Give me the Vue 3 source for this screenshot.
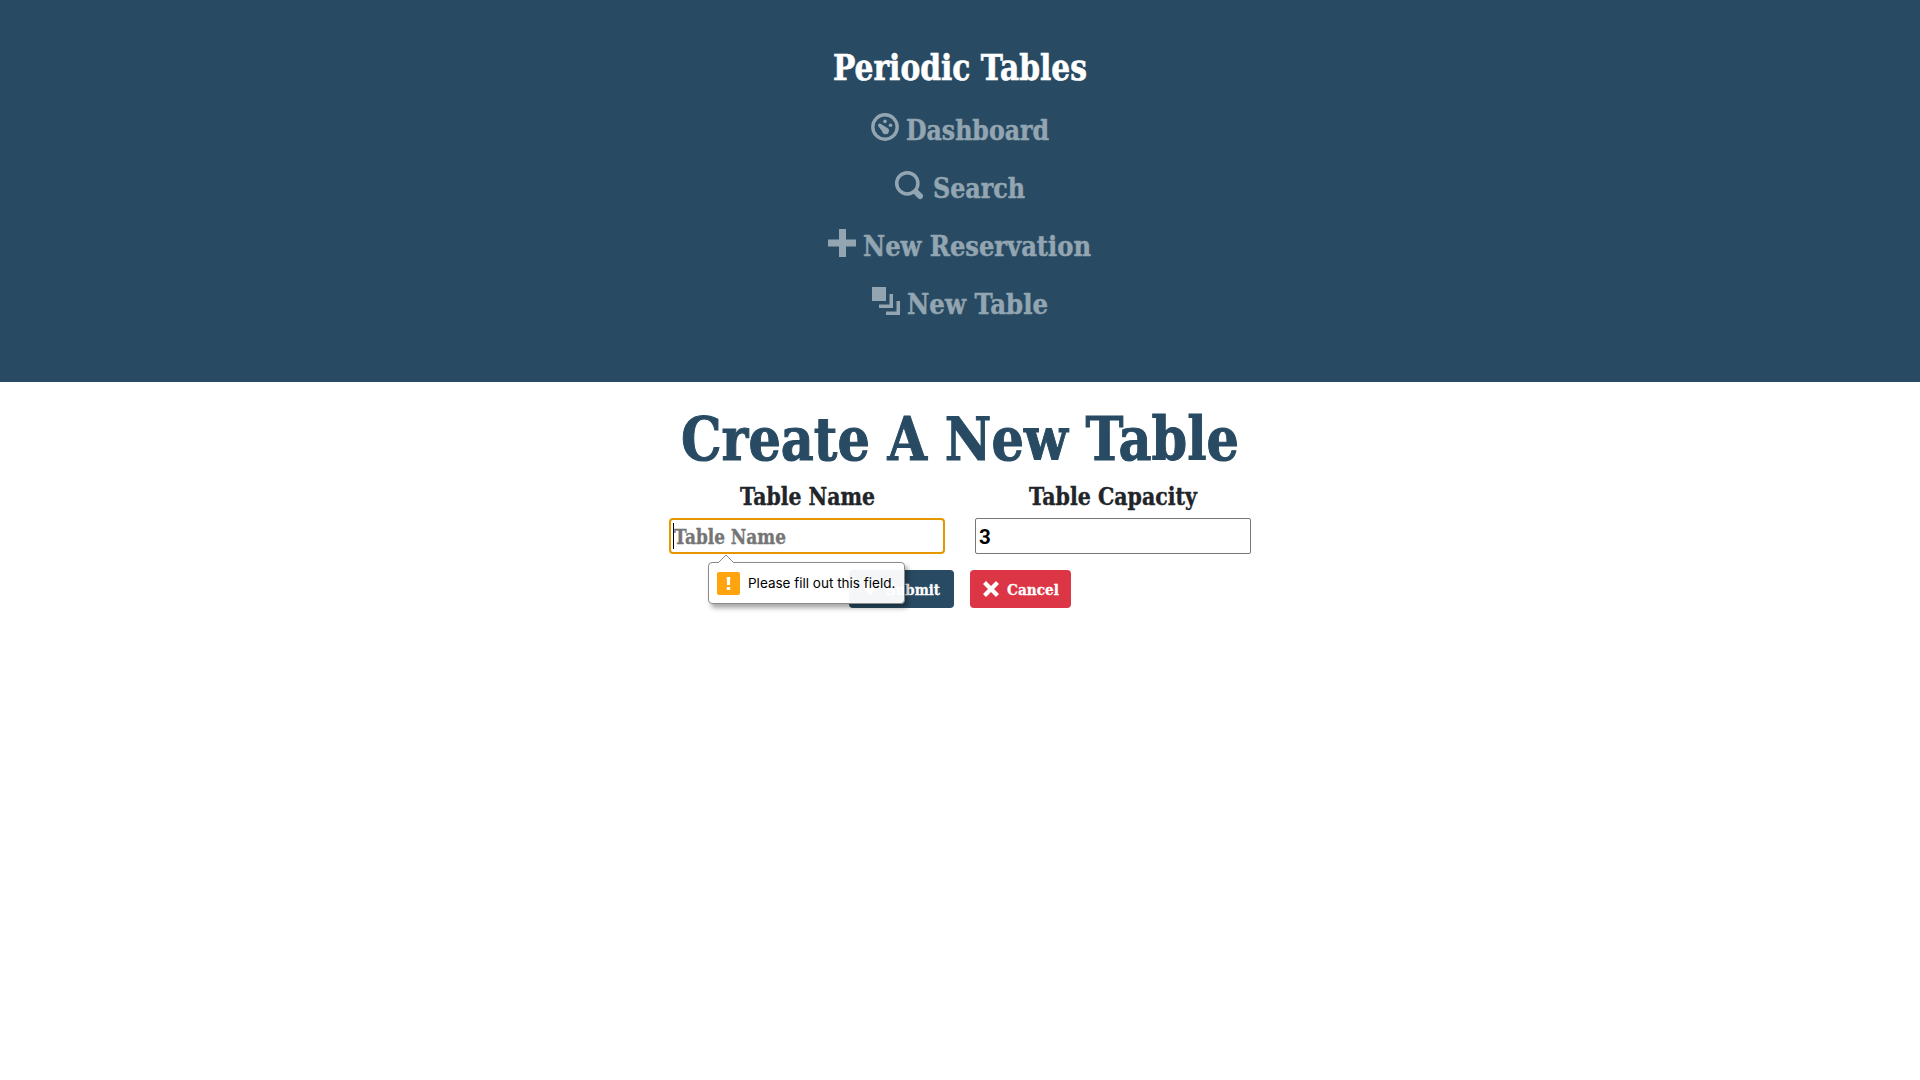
<script setup>
const nav = [
  { label: 'Dashboard', icon: 'dashboard', w: 143, gap: 7 },
  { label: 'Search', icon: 'search', w: 92, gap: 10 },
  { label: 'New Reservation', icon: 'plus', w: 228, gap: 7 },
  { label: 'New Table', icon: 'copy', w: 141, gap: 7 },
]
</script>

<template>
  <div class="page">
    <header class="top">
      <svg class="slab brand" width="254" height="44"><text x="0" y="36" textLength="254" lengthAdjust="spacingAndGlyphs">Periodic Tables</text></svg>
      <nav>
        <a v-for="n in nav" :key="n.label" class="link" :style="{ gap: n.gap + 'px' }">
          <svg class="icon" width="28" height="28" viewBox="0 0 28 28">
            <template v-if="n.icon === 'dashboard'">
              <circle cx="14" cy="14" r="12.2" fill="none" stroke="currentColor" stroke-width="3.4" />
              <circle cx="14" cy="8.4" r="1.8" /><circle cx="19.5" cy="12.3" r="1.8" />
              <path d="M7.3 11.300Q8.500 9.900 10 11L16 14.800A3.400 3.400 0 1 1 11.200 18.200L7.500 13.500Q6.500 12.300 7.300 11.300z" />
            </template>
            <template v-else-if="n.icon === 'search'">
              <circle cx="12.3" cy="12.3" r="10.6" fill="none" stroke="currentColor" stroke-width="3.5" />
              <path d="M21 21L25.100 25.100" stroke="currentColor" stroke-width="5.8" stroke-linecap="round" />
            </template>
            <path v-else-if="n.icon === 'plus'" d="M11 0h7v10.500h10v7H18V28h-7V17.500H0v-7h11z" />
            <path v-else d="M0 0h14v14H0zM17.500 7H21v14H7v-3.500h10.500zM24.500 14H28v14H14v-3.500h10.500z" />
          </svg>
          <svg class="slab item" :width="n.w" height="34"><text x="0" y="27" :textLength="n.w" lengthAdjust="spacingAndGlyphs">{{ n.label }}</text></svg>
        </a>
      </nav>
    </header>
    <main>
      <svg class="slab title" width="558" height="64"><text x="0" y="50" textLength="558" lengthAdjust="spacingAndGlyphs">Create A New Table</text></svg>
      <div class="fields">
        <div class="field">
          <svg class="slab label" width="135" height="30"><text x="0" y="22" textLength="135" lengthAdjust="spacingAndGlyphs">Table Name</text></svg>
          <div class="input focus">
            <span class="caret"></span>
            <svg class="slab value hint" width="112" height="28"><text x="0" y="21" textLength="112" lengthAdjust="spacingAndGlyphs">Table Name</text></svg>
          </div>
          <div class="bubble">
            <svg class="tip" width="18" height="9" viewBox="0 0 18 9"><path d="M1 9L9 1l8 8" fill="#fff" stroke="#8a8a8a" /></svg>
            <svg width="23" height="23" viewBox="0 0 23 23"><rect width="23" height="23" rx="2" fill="#ffa30f" /><path d="M9.700 5h3.600l-.4 8h-2.800zM9.800 15h3.400v3H9.800z" fill="#fff" /></svg>
            <span>Please fill out this field.</span>
          </div>
        </div>
        <div class="field">
          <svg class="slab label" width="168" height="30"><text x="0" y="22" textLength="168" lengthAdjust="spacingAndGlyphs">Table Capacity</text></svg>
          <div class="input"><span class="three">3</span></div>
        </div>
      </div>
      <div class="buttons">
        <button class="submit">
          <svg width="16" height="16" viewBox="0 0 16 16"><path d="M5 0h6v6h4L8 14 1 6h4z" /></svg>
          <svg class="slab btn" width="54" height="22"><text x="0" y="16.500" textLength="54" lengthAdjust="spacingAndGlyphs">Submit</text></svg>
        </button>
        <button class="cancel">
          <svg width="16" height="16" viewBox="0 0 16 16"><path d="M3 0l5 5 5-5 3 3-5 5 5 5-3 3-5-5-5 5-3-3 5-5-5-5z" /></svg>
          <svg class="slab btn" width="52" height="22"><text x="0" y="16.500" textLength="52" lengthAdjust="spacingAndGlyphs">Cancel</text></svg>
        </button>
      </div>
    </main>
  </div>
</template>

<style>
body { margin: 0; background: #fff; }
</style>
<style scoped>
.page { height: 1080px; overflow: hidden; font-family: "Inter", sans-serif; }
svg { display: block; flex: none; fill: currentColor; overflow: visible; }
.slab { font-family: "Roboto Slab", "DejaVu Serif", serif; font-weight: 700; }
.slab text { stroke: currentColor; stroke-width: .018em; }
.top { height: 382px; box-sizing: border-box; padding-top: 44px; background: #284b63; color: #fff; display: flex; flex-direction: column; align-items: center; }
.brand { font-size: 35px; }
nav { display: flex; flex-direction: column; align-items: center; margin-top: 18px; gap: 14px; color: #93a5b1; }
.link { display: flex; height: 44px; align-items: flex-start; margin-right: 1px; }
.icon { margin-top: 7px; }
.item { margin-top: 6.500px; font-size: 28px; }
main { display: flex; flex-direction: column; align-items: center; color: #212529; }
.title { margin-top: 28px; font-size: 59px; color: #284b63; }
.fields { display: flex; gap: 30px; margin-top: 9px; }
.field { position: relative; width: 276px; display: flex; flex-direction: column; align-items: center; }
.label { font-size: 23.500px; }
.input { box-sizing: border-box; width: 276px; height: 36px; margin-top: 5px; border: 1px solid #767676; border-radius: 2px; display: flex; align-items: flex-start; }
.input.focus { border: 2px solid #e59700; border-radius: 4px; }
.value { font-size: 19.500px; margin-top: 4px; color: #000; }
.hint { margin-top: 3px; margin-left: 0; color: #757575; }
.three { margin: 5px 0 0 3px; font: 700 20.500px/26px Roboto, sans-serif; color: #000; }
.caret { width: 1px; height: 26px; margin: 3px 0 0 2px; background: #000; }
.bubble { position: absolute; left: 39px; top: 79px; z-index: 2; box-sizing: border-box; width: 197px; height: 42px; padding-left: 8px; border: 1px solid #8a8a8a; border-radius: 4px; background: rgba(255,255,255,.95); box-shadow: 3px 4px 5px rgba(0,0,0,.35); display: flex; align-items: center; gap: 8px; font-size: 13.500px; color: #000; white-space: nowrap; }
.tip { position: absolute; left: 8px; top: -9px; }
.buttons { display: flex; gap: 16px; margin-top: 16px; }
button { border: 0; height: 38px; padding: 0 12.500px; border-radius: 4px; display: flex; align-items: center; gap: 8px; color: #fff; }
.submit { width: 105px; background: #284b63; }
.cancel { width: 101px; background: #dc3545; }
.btn { font-size: 15.500px; }
</style>
